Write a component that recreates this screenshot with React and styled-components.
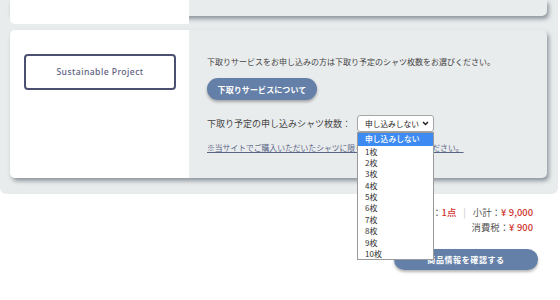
import React from "react";
import styled, { createGlobalStyle } from "styled-components";

const Global = createGlobalStyle`
  html, body { margin: 0; padding: 0; background: #ffffff; }
  body { width: 560px; height: 300px; overflow: hidden; font-family: "Noto Sans CJK JP", "Noto Sans", sans-serif; }
`;

const Wrapper = styled.div`
  width: 558px;
  box-sizing: border-box;
  background: #e9eced;
  border-radius: 0 0 6px 6px;
  padding: 0 11px 16px 10px;
`;

const Card = styled.div`
  display: grid;
  grid-template-columns: 179px 1fr;
  height: ${(p) => p.$h}px;
  margin-top: ${(p) => p.$mt || 0}px;
  border-radius: ${(p) => (p.$top ? "0 0 5px 5px" : "5px")};
  box-shadow: 2px 3px 4px rgba(70, 82, 92, 0.55);
  background: #e9eced;
`;

const LeftPanel = styled.div`
  background: #ffffff;
  border-radius: ${(p) => (p.$top ? "0 0 0 5px" : "5px 0 0 5px")};
  padding: 24px 13px 0 14px;
  box-sizing: border-box;
`;

const RightPanel = styled.div`
  padding: 25px 18px 0 18px;
  display: flex;
  flex-direction: column;
  align-items: flex-start;
`;

const ProjectBox = styled.div`
  height: 36px;
  box-sizing: border-box;
  border: 2px solid #4c5070;
  border-radius: 4px;
  display: flex;
  align-items: center;
  justify-content: center;
  font-family: "Noto Sans", sans-serif;
  font-size: 8.6px;
  font-weight: 500;
  letter-spacing: 0.45px;
  color: #5d6080;
`;

const Lead = styled.p`
  margin: 0;
  font-size: 8px;
  line-height: 13px;
  color: #444;
`;

const PillButton = styled.button`
  border: none;
  background: #6580a8;
  color: #fff;
  font-family: "Noto Sans CJK JP", sans-serif;
  font-weight: 700;
  font-size: 8px;
  letter-spacing: ${(p) => p.$ls || 0}px;
  height: ${(p) => p.$h}px;
  width: ${(p) => p.$w}px;
  border-radius: 999px;
  box-shadow: 0 2px 3px rgba(0, 0, 0, 0.3);
  margin-top: ${(p) => p.$mt || 0}px;
  padding: 0;
  cursor: pointer;
`;

const SelectRow = styled.div`
  display: flex;
  align-items: center;
  margin-top: 15px;
`;

const Label = styled.span`
  font-size: 9px;
  color: #444;
  width: 150px;
`;

const SelectWrap = styled.div`
  position: relative;
  width: 77px;
`;

const SelectBox = styled.div`
  height: 17px;
  box-sizing: border-box;
  border: 1px solid #a5a5a5;
  border-radius: 3px;
  background: #fff;
  display: flex;
  align-items: center;
  justify-content: space-between;
  padding: 0 4px 0 7px;
  font-size: 7.7px;
  color: #222;
`;

const DropList = styled.ul`
  position: absolute;
  top: 100%;
  left: 0;
  width: 77px;
  box-sizing: border-box;
  margin: 0;
  padding: 0;
  list-style: none;
  background: #fff;
  border: 1px solid #9a9a9a;
  z-index: 10;
`;

const DropItem = styled.li`
  height: ${(p) => (p.$active ? 12.5 : 11.4)}px;
  line-height: ${(p) => (p.$active ? 12.5 : 11.4)}px;
  padding-left: 7px;
  font-size: ${(p) => (p.$active ? 7.8 : 8)}px;
  color: ${(p) => (p.$active ? "#fff" : "#333")};
  background: ${(p) => (p.$active ? "#3d8bf2" : "transparent")};
  font-weight: ${(p) => (p.$active ? 500 : 400)};
`;

const Note = styled.a`
  margin-top: 9px;
  font-size: 7.8px;
  line-height: 13px;
  color: #5a6585;
  text-decoration: underline;
  white-space: nowrap;
`;

const Summary = styled.div`
  display: flex;
  flex-direction: column;
  align-items: flex-end;
  padding: 11px 22px 0 0;
`;

const SumLine = styled.div`
  padding-right: 5px;
  font-size: 9.4px;
  line-height: 15px;
  color: #555;
  display: flex;
  align-items: center;
`;

const Red = styled.span`
  color: #d0302c;
  font-weight: 500;
`;

const Yen = styled.span`
  margin-right: 2.5px;
`;

const Sep = styled.span`
  color: #c4c4c4;
  margin: 0 7px;
`;

const options = ["1枚", "2枚", "3枚", "4枚", "5枚", "6枚", "7枚", "8枚", "9枚", "10枚"];

export default function App() {
  return (
    <>
      <Global />
      <Wrapper>
        <Card $h={16} $top>
          <LeftPanel $top />
          <div />
        </Card>
        <Card $h={148} $mt={14}>
          <LeftPanel>
            <ProjectBox>Sustainable Project</ProjectBox>
          </LeftPanel>
          <RightPanel>
            <Lead>下取りサービスをお申し込みの方は下取り予定のシャツ枚数をお選びください。</Lead>
            <PillButton $w={110} $h={22} $mt={10} $ls={0.1}>下取りサービスについて</PillButton>
            <SelectRow>
              <Label>下取り予定の申し込みシャツ枚数：</Label>
              <SelectWrap>
                <SelectBox>
                  <span>申し込みしない</span>
                  <svg width="7" height="5" viewBox="0 0 7 5">
                    <path d="M1 1 L3.5 3.5 L6 1" fill="none" stroke="#222" strokeWidth="1.5" />
                  </svg>
                </SelectBox>
                <DropList>
                  <DropItem $active>申し込みしない</DropItem>
                  {options.map((o) => (
                    <DropItem key={o}>{o}</DropItem>
                  ))}
                </DropList>
              </SelectWrap>
            </SelectRow>
            <Note>※当サイトでご購入いただいたシャツに限ります。予めご了承ください。</Note>
          </RightPanel>
        </Card>
      </Wrapper>
      <Summary>
        <SumLine>
          合計数量：<Red>1点</Red>
          <Sep>|</Sep>
          小計：<Red><Yen>¥</Yen>9,000</Red>
        </SumLine>
        <SumLine>
          消費税：<Red><Yen>¥</Yen>900</Red>
        </SumLine>
        <PillButton $w={144} $h={21} $mt={14} $ls={0.6}>商品情報を確認する</PillButton>
      </Summary>
    </>
  );
}
